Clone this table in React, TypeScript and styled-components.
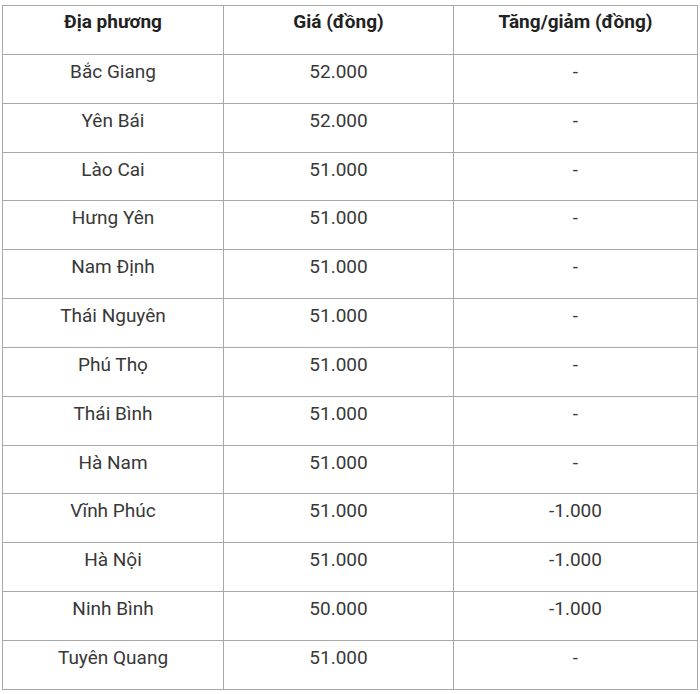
import React from 'react';
import styled, { createGlobalStyle } from 'styled-components';

interface IRow {
    place: string;
    price: string;
    change: string;
};

const rows: IRow[] = [
    { place: 'Bắc Giang', price: '52.000', change: '-' },
    { place: 'Yên Bái', price: '52.000', change: '-' },
    { place: 'Lào Cai', price: '51.000', change: '-' },
    { place: 'Hưng Yên', price: '51.000', change: '-' },
    { place: 'Nam Định', price: '51.000', change: '-' },
    { place: 'Thái Nguyên', price: '51.000', change: '-' },
    { place: 'Phú Thọ', price: '51.000', change: '-' },
    { place: 'Thái Bình', price: '51.000', change: '-' },
    { place: 'Hà Nam', price: '51.000', change: '-' },
    { place: 'Vĩnh Phúc', price: '51.000', change: '-1.000' },
    { place: 'Hà Nội', price: '51.000', change: '-1.000' },
    { place: 'Ninh Bình', price: '50.000', change: '-1.000' },
    { place: 'Tuyên Quang', price: '51.000', change: '-' },
];

const GlobalStyle = createGlobalStyle`
    body {
        margin: 0;
        background: #fff;
        font-family: Roboto, 'Liberation Sans', sans-serif;
    }
`;

const App = () => {
  return (
    <>
        <GlobalStyle />
        <StyledWrapper>
            <StyledTable>
                <colgroup>
                    <col style={{ width: 221 }} />
                    <col style={{ width: 230 }} />
                    <col style={{ width: 244 }} />
                </colgroup>
                <thead>
                    <tr>
                        <StyledHead>Địa phương</StyledHead>
                        <StyledHead>Giá (đồng)</StyledHead>
                        <StyledHead>Tăng/giảm (đồng)</StyledHead>
                    </tr>
                </thead>
                <tbody>
                    {rows.map(row => (
                        <tr key={row.place}>
                            <StyledCell>{row.place}</StyledCell>
                            <StyledCell>{row.price}</StyledCell>
                            <StyledCell>{row.change}</StyledCell>
                        </tr>
                    ))}
                </tbody>
            </StyledTable>
        </StyledWrapper>
    </>
  )
}

export default App;

const StyledWrapper = styled.div`
    padding: 5px 3px 0 2px;
`;

const StyledTable = styled.table`
    width: 695px;
    border-collapse: collapse;
    table-layout: fixed;
`;

const StyledHead = styled.th`
    height: 48.85px;
    box-sizing: border-box;
    padding: 5px 8px 0;
    border: 1px solid #a8a8a8;
    text-align: center;
    vertical-align: top;
    font-size: 19px;
    line-height: 22px;
    font-weight: 700;
    color: #222;
`;

const StyledCell = styled.td`
    height: 48.85px;
    box-sizing: border-box;
    padding: 6px 8px 0;
    border: 1px solid #a8a8a8;
    text-align: center;
    vertical-align: top;
    font-size: 19px;
    line-height: 22px;
    color: #383838;
`;
